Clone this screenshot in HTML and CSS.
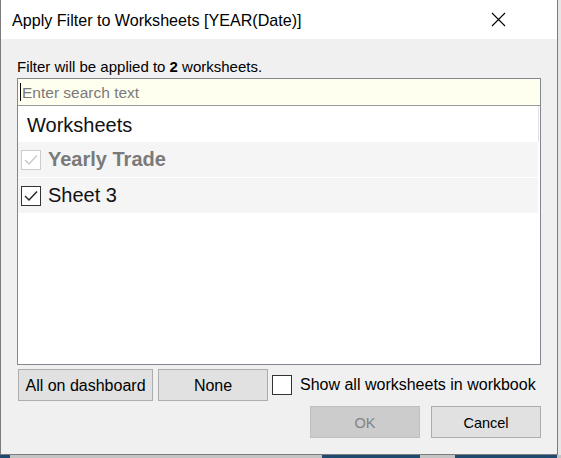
FILE: index.html
```html
<!DOCTYPE html>
<html>
<head>
<meta charset="utf-8">
<link rel="stylesheet" href="styles.css">
</head>
<body>
<div class="screen">
  <div class="dialog">
    <div class="titlebar">
      <span class="title">Apply Filter to Worksheets [YEAR(Date)]</span>
      <svg class="close" width="15" height="15" viewBox="0 0 15 15"><path d="M1 1 L14 14 M14 1 L1 14" stroke="#000" stroke-width="1.1" fill="none"/></svg>
    </div>
    <div class="content">
      <div class="info">Filter will be applied to <b>2</b> worksheets.</div>
      <div class="listbox">
        <div class="search"><span class="caret"></span><span class="placeholder">Enter search text</span></div>
        <div class="header">Worksheets</div>
        <div class="row disabled">
          <span class="cb cb-disabled"><svg width="14" height="12" viewBox="0 0 14 12"><path d="M1 6 L5 10 L13 1.5" stroke="#c8c8c8" stroke-width="1.4" fill="none"/></svg></span>
          <span class="label bold">Yearly Trade</span>
        </div>
        <div class="row">
          <span class="cb"><svg width="14" height="12" viewBox="0 0 14 12"><path d="M1 6 L5 10 L13 1.5" stroke="#222" stroke-width="1.4" fill="none"/></svg></span>
          <span class="label">Sheet 3</span>
        </div>
      </div>
      <div class="actions">
        <button class="btn btn-wide">All on dashboard</button>
        <button class="btn">None</button>
        <span class="cb cb-show"></span>
        <span class="show-label">Show all worksheets in workbook</span>
      </div>
      <div class="footer">
        <button class="btn btn-small btn-disabled">OK</button>
        <button class="btn btn-small">Cancel</button>
      </div>
    </div>
  </div>
  <div class="strip">
    <span class="seg blue s1"></span>
    <span class="seg gray s2"></span>
    <span class="seg blue s3"></span>
    <span class="seg gray s4"></span>
    <span class="seg blue s5"></span>
    <span class="seg gray s6"></span>
  </div>
</div>
</body>
</html>
```
FILE: styles.css
```css
html, body {
  margin: 0;
  padding: 0;
  background: #e6e6e6;
  font-family: "Liberation Sans", Arial, sans-serif;
}
.screen {
  width: 561px;
  height: 458px;
  display: flex;
  flex-direction: column;
  overflow: hidden;
}
.dialog {
  box-sizing: border-box;
  width: 558px;
  height: 455px;
  border: 1px solid #7c7c7c;
  border-top: none;
  background: #f0f0f0;
  display: flex;
  flex-direction: column;
}
.titlebar {
  height: 39px;
  background: #fff;
  display: flex;
  align-items: center;
  padding-left: 11px;
}
.title {
  font-size: 16.1px;
  color: #000;
  padding-top: 2px;
}
.close {
  margin-left: auto;
  margin-right: 51px;
}
.content {
  padding: 0 0 0 16px;
  display: flex;
  flex-direction: column;
}
.info {
  margin-top: 19px;
  font-size: 15px;
  line-height: 18px;
  height: 18px;
  color: #000;
}
.info b {
  font-weight: bold;
}
.listbox {
  box-sizing: border-box;
  margin-top: 2px;
  width: 524px;
  height: 287px;
  border: 1px solid #828790;
  background: #fff;
  display: flex;
  flex-direction: column;
}
.search {
  box-sizing: border-box;
  height: 27px;
  background: #fffff0;
  border-bottom: 1px solid #9a9a9a;
  display: flex;
  align-items: center;
  padding-left: 2px;
}
.caret {
  width: 1px;
  height: 18px;
  background: #000;
  margin-right: 1px;
}
.placeholder {
  font-size: 15.5px;
  color: #7a7a7a;
  padding-top: 1px;
}
.header {
  box-sizing: border-box;
  height: 36px;
  padding-top: 3px;
  line-height: 33px;
  padding-left: 9px;
  font-size: 20px;
  color: #111;
  border-right: 1px solid #e0e0e0;
  margin-right: 1px;
}
.row {
  height: 35px;
  background: #f5f5f5;
  margin-right: 2px;
  margin-bottom: 1px;
  display: flex;
  align-items: center;
  padding-left: 3px;
}
.label {
  font-size: 20px;
  line-height: 35px;
  color: #111;
  margin-left: 7px;
}
.label.bold {
  font-weight: bold;
  color: #7a7a7a;
}
.cb {
  box-sizing: border-box;
  width: 20px;
  height: 20px;
  border: 1px solid #333;
  background: #fff;
  display: flex;
  align-items: center;
  justify-content: center;
}
.cb-disabled {
  border-color: #cccccc;
}
.actions {
  display: flex;
  align-items: center;
  margin-top: 4px;
  padding-left: 1px;
}
.btn {
  box-sizing: border-box;
  height: 32px;
  width: 110px;
  border: 1px solid #adadad;
  background: #e1e1e1;
  font-family: "Liberation Sans", Arial, sans-serif;
  font-size: 16px;
  color: #000;
  padding: 2px 0 0 0;
  margin: 0 5px 0 0;
}
.btn-wide {
  width: 135px;
}
.cb-show {
  margin-left: -1px;
}
.show-label {
  font-size: 16px;
  color: #000;
  margin-left: 8px;
}
.footer {
  display: flex;
  justify-content: flex-end;
  margin-top: 5px;
  width: 524px;
  gap: 11px;
}
.btn-small {
  font-size: 14.5px;
  margin: 0;
}
.btn-disabled {
  background: #cccccc;
  border-color: #bfbfbf;
  color: #838383;
}
.strip {
  display: flex;
  height: 3px;
}
.seg {
  display: block;
  height: 3px;
}
.blue { background: #1f4a70; }
.gray { background: #c4c4c4; }
.s1 { width: 10px; }
.s2 { width: 312px; }
.s3 { width: 98px; }
.s4 { width: 35px; }
.s5 { width: 102px; }
.s6 { width: 4px; }
```
